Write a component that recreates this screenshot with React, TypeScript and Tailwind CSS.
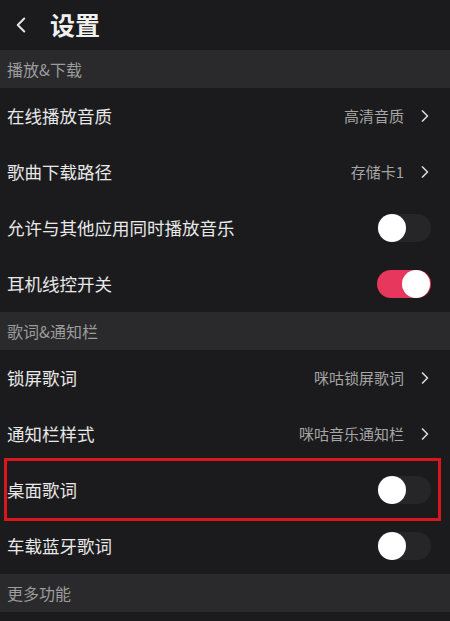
import { ChevronLeft, ChevronRight } from 'lucide-react';

type Row =
  | { kind: 'link'; label: string; value: string }
  | { kind: 'toggle'; label: string; on: boolean; marked?: boolean };

const sections: { title: string; rows: Row[] }[] = [
  {
    title: '播放&下载',
    rows: [
      { kind: 'link', label: '在线播放音质', value: '高清音质' },
      { kind: 'link', label: '歌曲下载路径', value: '存储卡1' },
      { kind: 'toggle', label: '允许与其他应用同时播放音乐', on: false },
      { kind: 'toggle', label: '耳机线控开关', on: true },
    ],
  },
  {
    title: '歌词&通知栏',
    rows: [
      { kind: 'link', label: '锁屏歌词', value: '咪咕锁屏歌词' },
      { kind: 'link', label: '通知栏样式', value: '咪咕音乐通知栏' },
      { kind: 'toggle', label: '桌面歌词', on: false, marked: true },
      { kind: 'toggle', label: '车载蓝牙歌词', on: false },
    ],
  },
  { title: '更多功能', rows: [] },
];

function Toggle({ on }: { on: boolean }) {
  return (
    <div
      className={`flex h-[28px] w-[54px] items-center rounded-full px-[1px] ${
        on ? 'justify-end bg-[#e8375c]' : 'justify-start bg-[#262628]'
      }`}
    >
      <div className="h-[28px] w-[28px] rounded-full bg-white" />
    </div>
  );
}

function SettingRow({ row }: { row: Row }) {
  const marked = row.kind === 'toggle' && row.marked;
  return (
    <div className="relative flex h-[56px] items-center justify-between pl-[7px] pr-[19px]">
      {marked && (
        <div className="pointer-events-none absolute left-[4px] right-[9px] top-[-4px] bottom-[-3px] border-[3px] border-[#d9161c]" />
      )}
      <span className="text-[17.5px] text-[#e8e8e8]">{row.label}</span>
      {row.kind === 'link' ? (
        <div className="flex items-center gap-[11px]">
          <span className="text-[15px] text-[#a5a5a5]">{row.value}</span>
          <ChevronRight size={20} strokeWidth={2} className="-mr-[4px] text-[#d8d8d8]" />
        </div>
      ) : (
        <Toggle on={row.on} />
      )}
    </div>
  );
}

export default function App() {
  return (
    <div
      className="h-[621px] w-[450px] overflow-hidden bg-[#1b1b1d]"
      style={{ fontFamily: '"Noto Sans CJK SC", "Noto Sans", sans-serif' }}
    >
      <div className="flex h-[50px] items-center gap-[16px] pl-[8px]">
        <ChevronLeft size={26} strokeWidth={1.8} className="text-[#e6e6e6]" />
        <span className="text-[25px] font-bold text-[#f0f0f0]">设置</span>
      </div>
      {sections.map((s) => (
        <div key={s.title}>
          <div className="flex h-[38px] items-center bg-[#2a2a2c] pl-[7px] text-[16px] text-[#9c9c9c]">
            {s.title}
          </div>
          {s.rows.map((r) => (
            <SettingRow key={r.label} row={r} />
          ))}
        </div>
      ))}
    </div>
  );
}
